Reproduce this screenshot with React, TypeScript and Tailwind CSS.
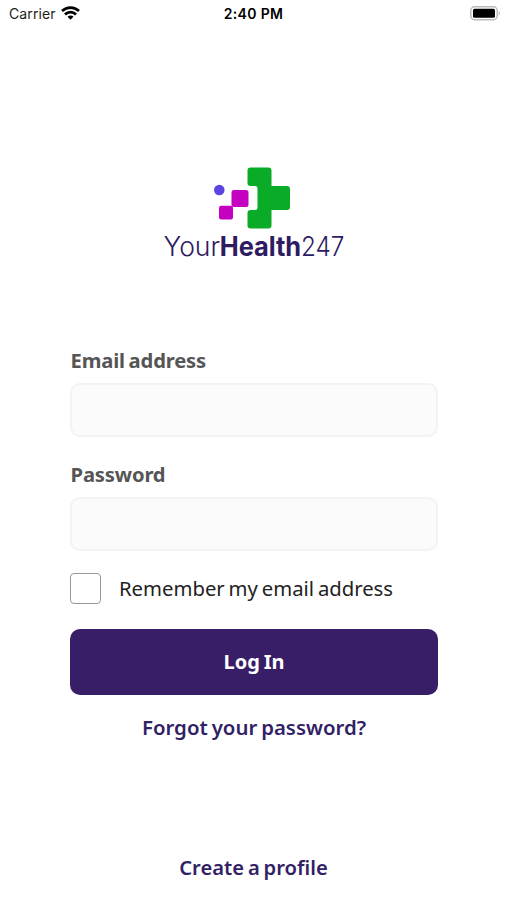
function StatusBar() {
  return (
    <header className="relative flex h-7 items-center justify-between pl-[9px] pr-[6px] font-['Inter','Liberation_Sans',sans-serif] text-[14px] leading-none text-[#1c1c1c] [word-spacing:0px]">
      <div className="flex items-center gap-[5px]">
        <span className="tracking-[0.1px]">Carrier</span>
        <svg width="19" height="14" viewBox="0 0 19 14" fill="none" stroke="#000" strokeWidth="2.8" className="-mt-[2px]">
          <path d="M1 5C5.8.4 13.2.4 18 5" />
          <path d="M4 8.4c3.1-3 7.9-3 11 0" />
          <path d="M6.5 10.8c1.7-1.6 4.3-1.6 6 0L9.5 13.8Z" fill="#000" stroke="none" />
        </svg>
      </div>
      <span className="absolute left-1/2 top-[7px] -translate-x-1/2 whitespace-nowrap text-[14px] font-semibold tracking-[0.35px] text-black">2:40 PM</span>
      <svg width="31" height="15" viewBox="0 0 31 15" fill="none" className="-mt-px">
        <rect x="0.8" y="0.8" width="26.4" height="12.9" rx="3.8" fill="#fff" stroke="#bbb" strokeWidth="1.5" />
        <rect x="3" y="2.8" width="22" height="9" rx="1.6" fill="#000" />
        <path d="M28.7 5v4.6c1.6-.5 1.6-4.1 0-4.6Z" fill="#b5b5b5" />
      </svg>
    </header>
  );
}

function Logo() {
  return (
    <svg className="mx-auto mt-[132px] block" width="187" height="104" viewBox="160 160 187 104" role="img" aria-label="YourHealth247">
      <path
        d="M250.5 167.5H268.5a3 3 0 0 1 3 3V186H287a3 3 0 0 1 3 3V207a3 3 0 0 1-3 3H271.5V225.5a3 3 0 0 1-3 3H250.5a3 3 0 0 1-3-3V213a3 3 0 0 1 3-3H255a2.5 2.5 0 0 0 2.5-2.5V188.5a2.5 2.5 0 0 0-2.5-2.5H250.5a3 3 0 0 1-3-3V170.5a3 3 0 0 1 3-3Z"
        fill="#0aac27"
      />
      <rect x="231.5" y="190" width="17" height="17" rx="2.5" fill="#c400c1" />
      <rect x="219" y="205.7" width="14" height="13.8" rx="2.2" fill="#c400c1" />
      <circle cx="219.3" cy="190" r="5.3" fill="#5b45e0" />
      <g fill="#2e1b62" fontFamily="Inter, 'Liberation Sans', sans-serif" fontSize="26.5">
        <text x="163.5" y="256.3" fontWeight="300" textLength="56.5" lengthAdjust="spacingAndGlyphs">Your</text>
        <text x="219.7" y="256.3" fontWeight="700" textLength="81.5" lengthAdjust="spacingAndGlyphs">Health</text>
        <text x="301" y="256.3" fontWeight="300" textLength="43.5" lengthAdjust="spacingAndGlyphs">247</text>
      </g>
    </svg>
  );
}

function Field({ id, label, type }: { id: string; label: string; type: string }) {
  return (
    <div>
      <label htmlFor={id} className="block h-7 pl-[0.5px] text-[20.2px] font-bold leading-7 text-[#555]">
        <span className="whitespace-nowrap tracking-[-0.15px]">{label}</span>
      </label>
      <input
        id={id}
        type={type}
        className="mt-[9px] block h-[54px] w-full rounded-[10px] border-2 border-[#f3f3f3] bg-[#fbfbfb] px-3 outline-none"
      />
    </div>
  );
}

export default function App() {
  return (
    <div className="flex h-[900px] w-full flex-col overflow-hidden bg-white font-['Noto_Sans','Liberation_Sans',sans-serif] [word-spacing:-1.4px]">
      <StatusBar />
      <Logo />
      <main className="ml-[70px] mt-[82px] w-[368px]">
        <div className="flex flex-col gap-[23px]">
          <Field id="email" label="Email address" type="email" />
          <Field id="password" label="Password" type="password" />
        </div>
        <label className="mt-[22px] flex h-8 items-center gap-[18px] text-[20.3px] text-[#222]">
          <input type="checkbox" className="-mt-px size-[31px] shrink-0 appearance-none rounded-[4px] border-[1.5px] border-[#999] bg-white" />
          <span className="-mt-[2px] whitespace-nowrap">Remember my email address</span>
        </label>
        <button className="mt-6 flex h-[66px] w-full items-center justify-center rounded-[10px] bg-[#371e66] text-[20px] font-bold text-white [word-spacing:-1.4px]">
          Log In
        </button>
        <a className="mt-[18px] block text-center text-[20.4px] font-semibold leading-7 text-[#321f66]">Forgot your password?</a>
      </main>
      <a className="mt-[112px] block text-center text-[20.2px] font-semibold leading-7 text-[#321f66]">Create a profile</a>
    </div>
  );
}
